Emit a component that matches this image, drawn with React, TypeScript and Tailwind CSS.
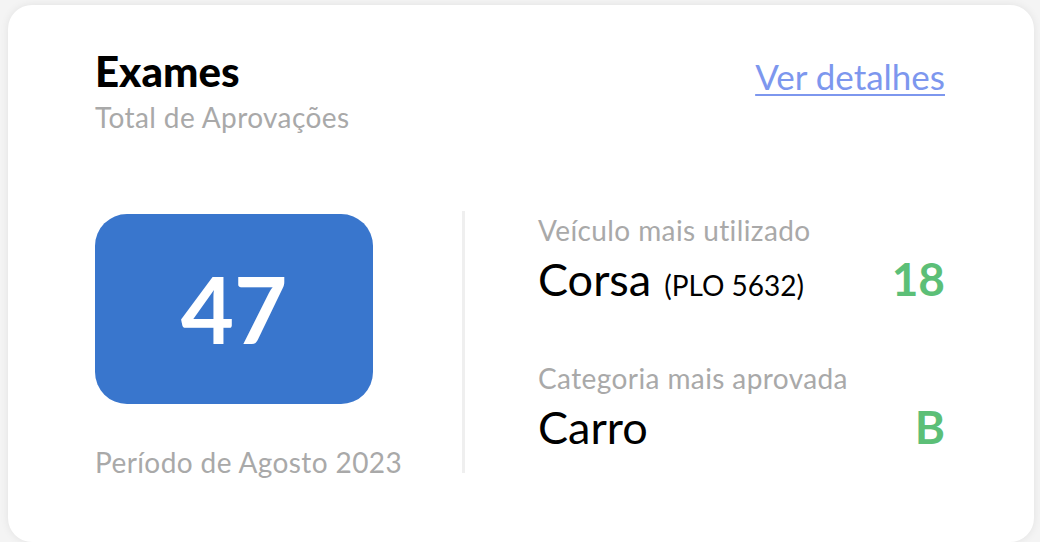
// Exam approvals summary card

const FONT = "font-['Lato','Noto_Sans',sans-serif]";

function StatRow({
  label,
  value,
  detail,
  highlight,
}: {
  label: string;
  value: string;
  detail?: string;
  highlight: string;
}) {
  return (
    <div>
      <p className="whitespace-nowrap text-[28px] leading-[34px] tracking-[0.4px] text-[#a9a9a9]">{label}</p>
      <div className="mt-[6px] flex items-baseline justify-between">
        <p className="whitespace-nowrap text-[45px] leading-[52px] text-black">
          {value}
          {detail && <span className="ml-[13px] text-[28px]">{detail}</span>}
        </p>
        <span className="text-[46px] font-bold leading-[52px] text-[#5cbf77]">{highlight}</span>
      </div>
    </div>
  );
}

export default function App() {
  return (
    <div className={`h-[542px] overflow-hidden bg-[#f4f4f4] pl-[8px] pr-[6px] pt-[5px] ${FONT}`}>
      <div className="h-[537px] rounded-[24px] bg-white pl-[87px] pr-[89px] pt-[41px] shadow-[0_0_8px_rgba(0,0,0,0.08)]">
        {/* Header */}
        <div className="flex items-start justify-between">
          <div>
            <h2 className="text-[42px] font-black leading-[50px] text-black">Exames</h2>
            <p className="mt-[4px] whitespace-nowrap text-[28px] leading-[34px] tracking-[0.4px] text-[#a9a9a9]">
              Total de Aprovações
            </p>
          </div>
          <a href="#" className="mt-[8px] text-[35px] leading-[44px] text-[#7d97ee] underline decoration-[2px] underline-offset-[4px]">
            Ver detalhes
          </a>
        </div>

        {/* Body */}
        <div className="mt-[80px] flex">
          <div className="w-[278px]">
            <div className="flex h-[190px] items-center justify-center rounded-[32px] bg-[#3976cd]">
              <span className="text-[92px] font-bold leading-none text-white">47</span>
            </div>
            <p className="mt-[41px] whitespace-nowrap text-[28px] leading-[34px] tracking-[0.4px] text-[#a9a9a9]">
              Período de Agosto 2023
            </p>
          </div>

          <div className="ml-[89px] mt-[-3px] h-[262px] w-[3px] bg-[#efefef]" />

          <div className="ml-[73px] mt-[-1px] flex flex-1 flex-col gap-[50px]">
            <StatRow label="Veículo mais utilizado" value="Corsa" detail="(PLO 5632)" highlight="18" />
            <StatRow label="Categoria mais aprovada" value="Carro" highlight="B" />
          </div>
        </div>
      </div>
    </div>
  );
}
